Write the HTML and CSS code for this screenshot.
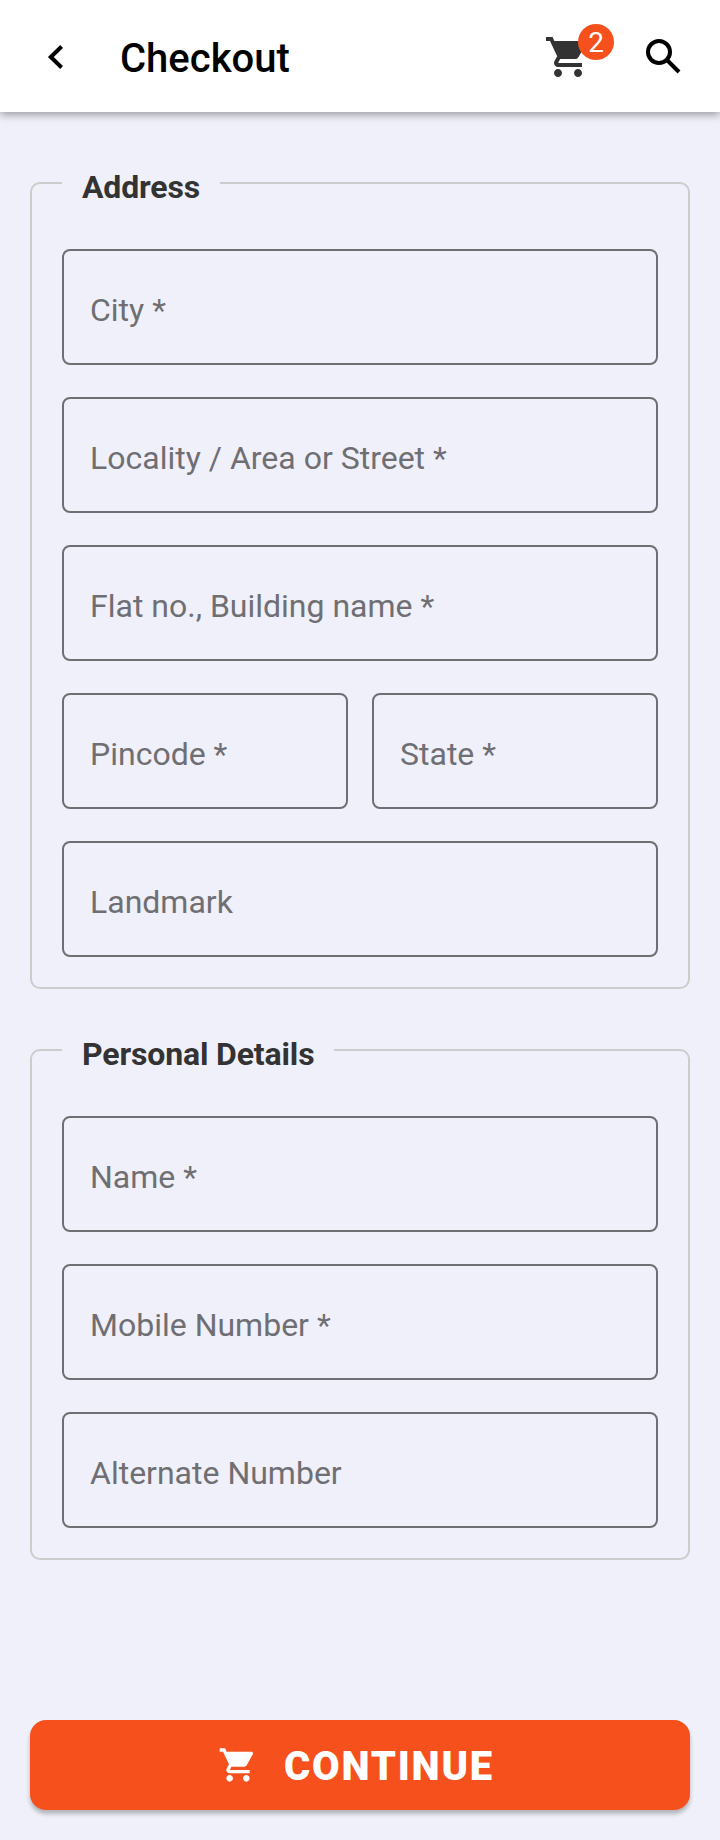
FILE: index.html
```html
<!DOCTYPE html>
<html lang="en">
<head>
<meta charset="utf-8">
<title>Checkout</title>
<link rel="stylesheet" href="styles.css">
</head>
<body>
<div class="screen">
  <header class="header">
    <button class="icon-button back" aria-label="Back"><svg width="24" height="32" viewBox="0 0 24 32"><path d="M17.6 5.5L6.8 16l10.8 10.5" fill="none" stroke="#000" stroke-width="4"/></svg></button>
    <h1 class="title">Checkout</h1>
    <button class="icon-button cart" aria-label="Cart">
      <svg width="48" height="48" viewBox="0 0 24 24" fill="#333"><path d="M7 18c-1.1 0-1.99.9-1.99 2S5.9 22 7 22s2-.9 2-2-.9-2-2-2zM1 2v2h2l3.6 7.59-1.35 2.45c-.16.28-.25.61-.25.96 0 1.1.9 2 2 2h12v-2H7.42c-.14 0-.25-.11-.25-.25l.03-.12.9-1.63h7.45c.75 0 1.41-.41 1.75-1.03l3.58-6.49A1.003 1.003 0 0 0 20 4H5.21l-.94-2H1zm16 16c-1.1 0-1.99.9-1.99 2s.89 2 1.99 2 2-.9 2-2-.9-2-2-2z"/></svg>
      <span class="badge">2</span>
    </button>
    <button class="icon-button search" aria-label="Search"><svg width="48" height="48" viewBox="0 0 48 48" fill="none" stroke="#000" stroke-width="4"><circle cx="19" cy="19" r="11"/><path d="M26.5 26.5L39 39"/></svg></button>
  </header>
  <main class="content">
    <fieldset class="group">
      <legend class="legend">Address</legend>
      <label class="field">City *</label>
      <label class="field">Locality / Area or Street *</label>
      <label class="field">Flat no., Building name *</label>
      <div class="row">
        <label class="field">Pincode *</label>
        <label class="field">State *</label>
      </div>
      <label class="field">Landmark</label>
    </fieldset>
    <fieldset class="group">
      <legend class="legend">Personal Details</legend>
      <label class="field">Name *</label>
      <label class="field">Mobile Number *</label>
      <label class="field">Alternate Number</label>
    </fieldset>
  </main>
  <footer class="footer">
    <button class="continue">
      <svg width="40" height="40" viewBox="0 0 24 24" fill="#fff"><path d="M7 18c-1.1 0-1.99.9-1.99 2S5.9 22 7 22s2-.9 2-2-.9-2-2-2zM1 2v2h2l3.6 7.59-1.35 2.45c-.16.28-.25.61-.25.96 0 1.1.9 2 2 2h12v-2H7.42c-.14 0-.25-.11-.25-.25l.03-.12.9-1.63h7.45c.75 0 1.41-.41 1.75-1.03l3.58-6.49A1.003 1.003 0 0 0 20 4H5.21l-.94-2H1zm16 16c-1.1 0-1.99.9-1.99 2s.89 2 1.99 2 2-.9 2-2-.9-2-2-2z"/></svg>
      <span class="continue-text">CONTINUE</span>
    </button>
  </footer>
</div>
</body>
</html>
```
FILE: styles.css
```css
* { box-sizing: border-box; }
body { margin: 0; background: #f0f0fa; font-family: Roboto, sans-serif; }
button { border: 0; padding: 0; background: none; font: inherit; }
svg { display: block; }
.screen { display: flex; flex-direction: column; height: 1840px; }
.header { display: flex; align-items: center; height: 112px; padding: 2px 32px 0 44px; background: #fff; box-shadow: 0 3px 8px rgba(0, 0, 0, .35); }
.title { flex: 1; margin: 4px 0 0 52px; font-size: 40px; font-weight: 500; line-height: 48px; color: #000; }
.icon-button { flex: none; }
.cart { position: relative; margin-right: 48px; }
.badge { position: absolute; left: 34px; top: -9px; width: 36px; height: 36px; border-radius: 50%; background: #f6511d; color: #fff; font-size: 28px; line-height: 38px; text-align: center; }
.content { flex: 1; display: flex; flex-direction: column; gap: 43px; padding: 53px 30px 0; }
.group { display: flex; flex-direction: column; gap: 32px; margin: 0; padding: 48px 30px 30px; min-width: 0; border: 2px solid #ccc; border-radius: 10px; }
.legend { height: 36px; padding: 0 20px; font-size: 32px; font-weight: 700; line-height: 44px; letter-spacing: -0.15px; color: #333; }
.field { display: flex; align-items: center; height: 116px; padding: 6px 26px 0; border: 2px solid #6f6f73; border-radius: 8px; font-size: 32px; color: #6f6f73; white-space: nowrap; }
.row { display: grid; grid-template-columns: 1fr 1fr; gap: 24px; }
.footer { padding: 0 30px 30px; }
.continue { display: flex; align-items: center; justify-content: center; gap: 26px; width: 100%; height: 90px; border-radius: 16px; background: #f6511d; color: #fff; font-size: 40px; font-weight: 900; letter-spacing: 1.75px; box-shadow: 0 4px 4px rgba(0, 0, 0, .25); }
.continue-text { padding: 3px 8px 0 0; }
```
